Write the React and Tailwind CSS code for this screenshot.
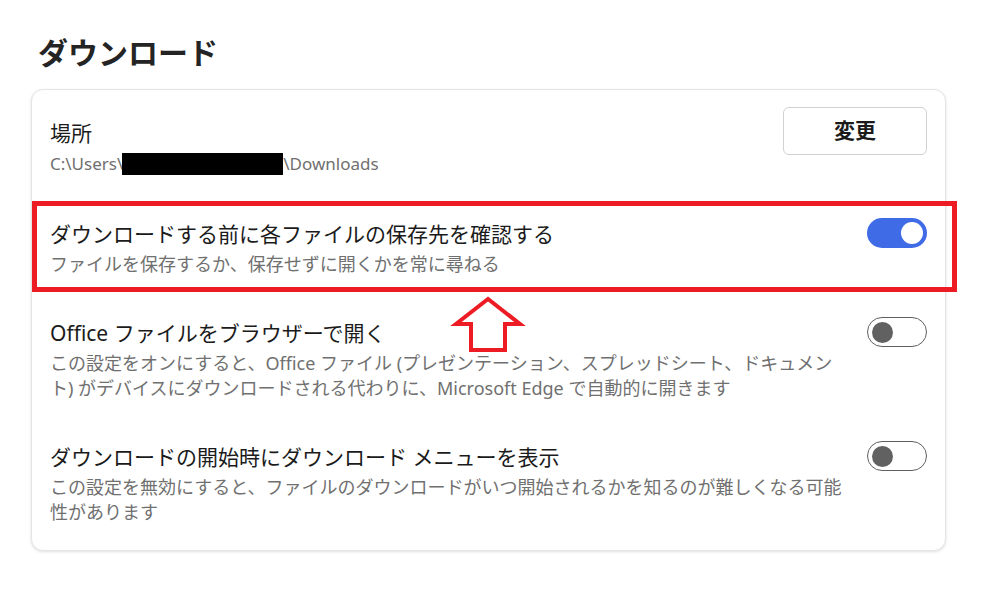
import React from 'react';

const FONT = { fontFamily: '"Noto Sans", "Noto Sans CJK JP", sans-serif' };

function Toggle({ on }) {
  if (on) {
    return (
      <div className="mt-[-2px] w-[60px] h-[30px] shrink-0 rounded-full bg-[#3f6be6] flex items-center justify-end pr-[4px]">
        <div className="w-[22px] h-[22px] rounded-full bg-white" />
      </div>
    );
  }
  return (
    <div className="mt-[-2px] w-[60px] h-[30px] shrink-0 rounded-full border-[1.5px] border-[#5f5f5f] bg-white flex items-center pl-[4px]">
      <div className="w-[21px] h-[21px] rounded-full bg-[#616161]" />
    </div>
  );
}

function Row({ title, desc, on }) {
  return (
    <div className="flex items-start justify-between px-[18px] py-[21px]">
      <div className="w-[800px]">
        <div className="text-[21px] leading-[28px] text-[#1b1b1b]">{title}</div>
        <div className="mt-[4px] text-[18px] leading-[25px] text-[#707070]">{desc}</div>
      </div>
      <Toggle on={on} />
    </div>
  );
}

export default function App() {
  return (
    <div className="relative w-[984px] h-[602px] bg-white px-[31px] pt-[33px]" style={FONT}>
      <h1 className="ml-[7px] text-[30px] leading-[40px] font-bold text-[#242424]">ダウンロード</h1>

      <div className="mt-[16px] w-[915px] rounded-[12px] border border-[#e4e4e4] bg-white shadow-[0_1px_3px_rgba(0,0,0,0.12)] pb-[4px]">
        <div className="flex items-start justify-between px-[18px] pt-[17px] pb-[23px]">
          <div className="mt-[12px]">
            <div className="text-[21px] leading-[28px] text-[#1b1b1b]">場所</div>
            <div className="mt-[4px] flex items-center text-[17px] leading-[25px] text-[#707070]">
              <span>C:\Users\</span>
              <span className="inline-block w-[161px] h-[22px] bg-black ml-[-1px]" />
              <span>\Downloads</span>
            </div>
          </div>
          <button
            type="button"
            className="w-[144px] h-[48px] rounded-[6px] border border-[#d1d1d1] bg-white text-[21px] font-semibold text-[#1b1b1b]"
          >
            変更
          </button>
        </div>

        <Row
          title="ダウンロードする前に各ファイルの保存先を確認する"
          desc="ファイルを保存するか、保存せずに開くかを常に尋ねる"
          on
        />
        <Row
          title="Office ファイルをブラウザーで開く"
          desc="この設定をオンにすると、Office ファイル (プレゼンテーション、スプレッドシート、ドキュメント) がデバイスにダウンロードされる代わりに、Microsoft Edge で自動的に開きます"
        />
        <Row
          title="ダウンロードの開始時にダウンロード メニューを表示"
          desc="この設定を無効にすると、ファイルのダウンロードがいつ開始されるかを知るのが難しくなる可能性があります"
        />
      </div>

      {/* annotation overlay */}
      <div className="absolute left-[32px] top-[201px] w-[925px] h-[91px] border-[5px] border-[#ed1c24] pointer-events-none" />
      <svg className="absolute left-[440px] top-[290px]" width="100" height="70" viewBox="0 0 100 70">
        <polygon
          points="48,9 16,34 31,34 31,60 65,60 65,34 80,34"
          fill="none"
          stroke="#ed1c24"
          strokeWidth="4"
          strokeLinejoin="miter"
        />
      </svg>
    </div>
  );
}
